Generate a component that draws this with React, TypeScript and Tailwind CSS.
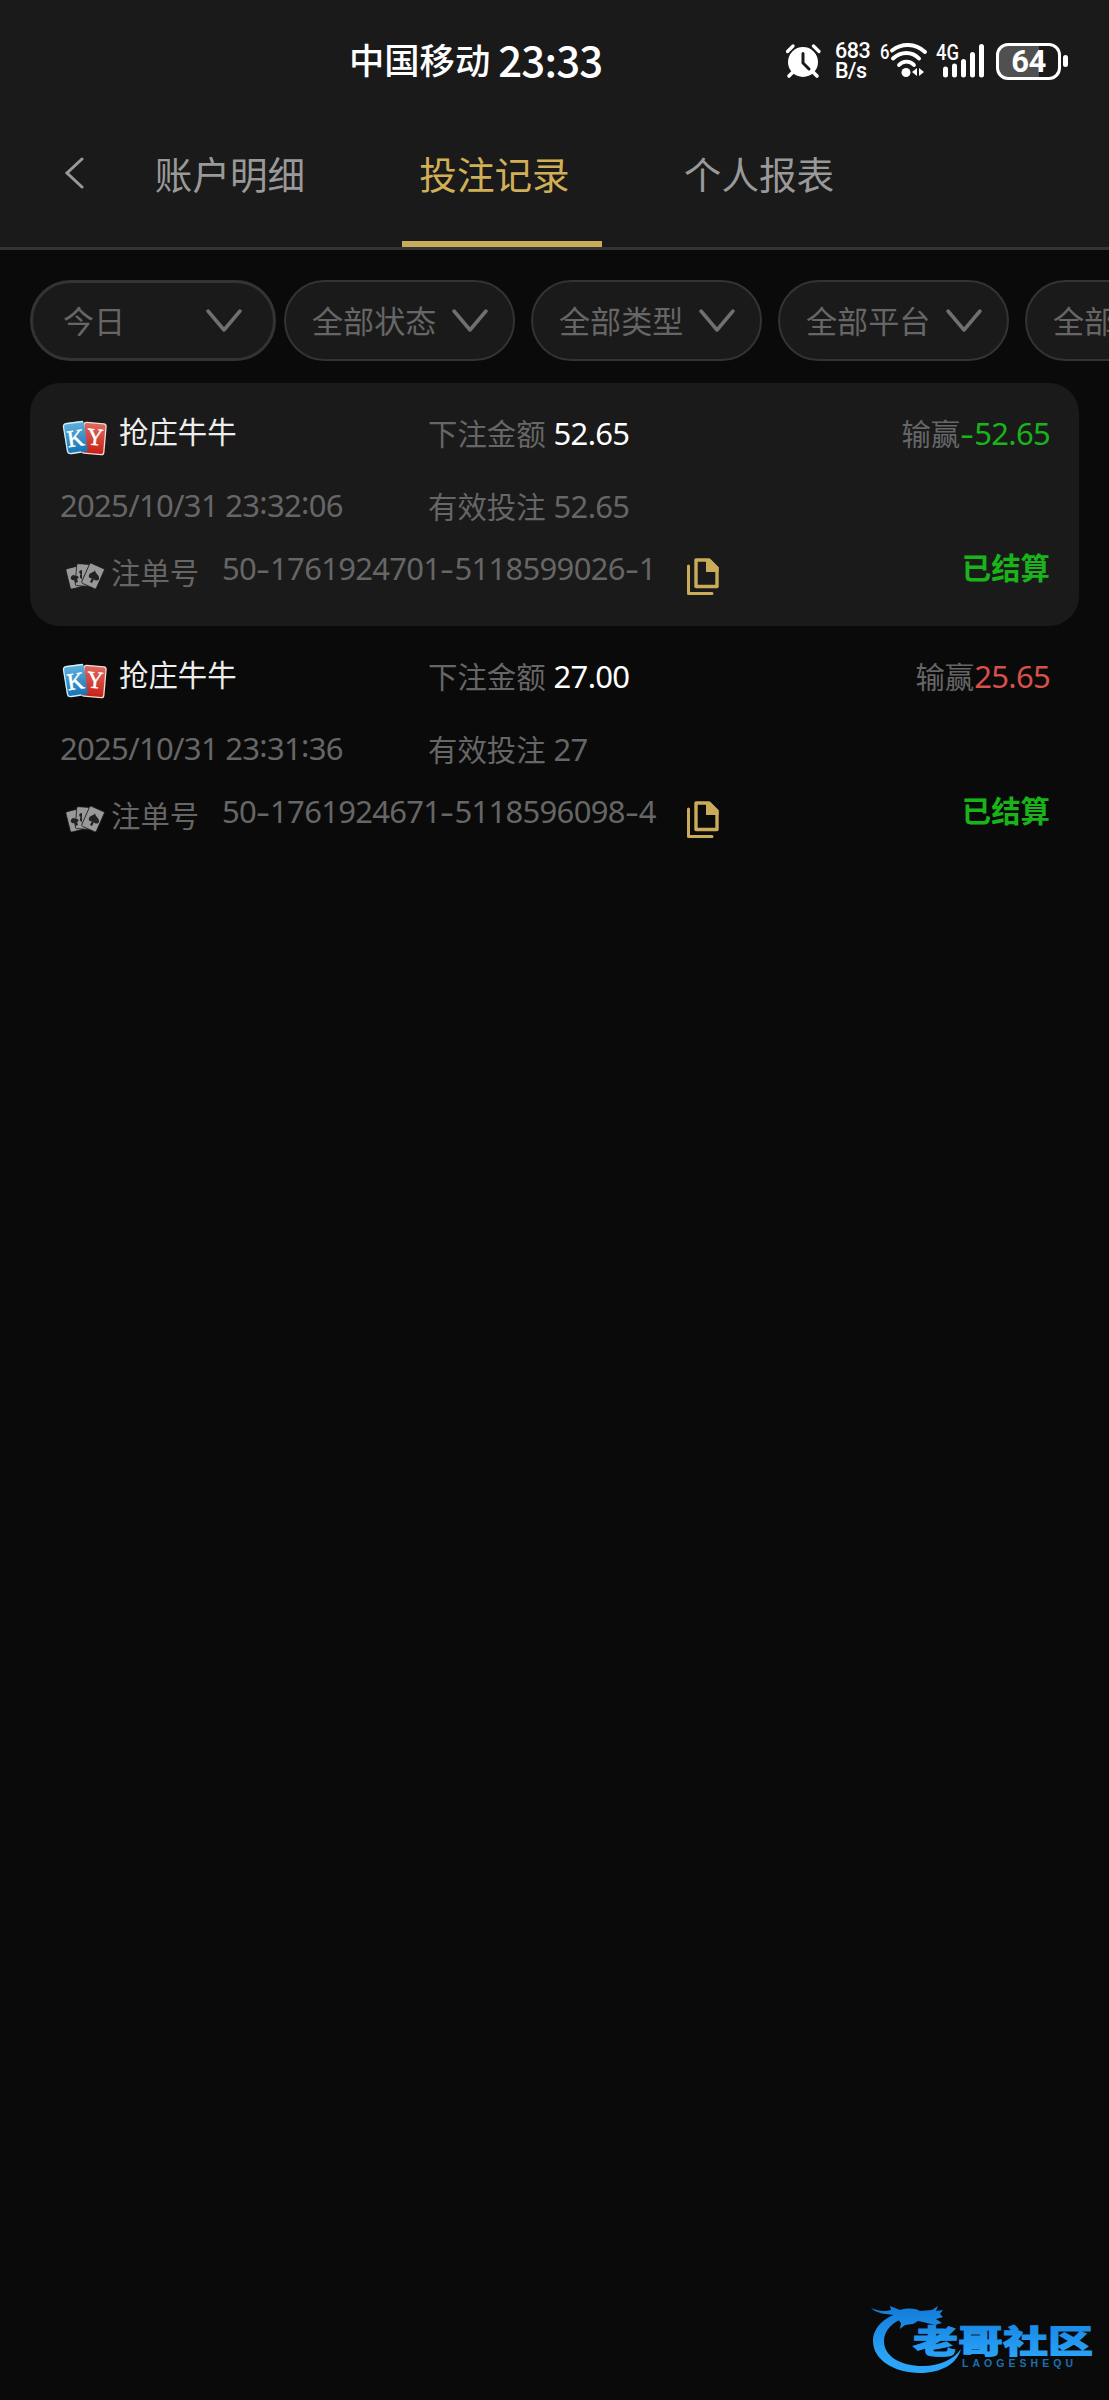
import type { ReactNode } from 'react';

const tabs = ['账户明细', '投注记录', '个人报表'];
const activeTab = '投注记录';

const filters = ['今日', '全部状态', '全部类型', '全部平台', '全部游戏'];

const records = [
  {
    game: '抢庄牛牛',
    time: '2025/10/31 23:32:06',
    amount: '52.65',
    valid: '52.65',
    profit: '-52.65',
    orderNo: '50-1761924701-5118599026-1',
    status: '已结算',
  },
  {
    game: '抢庄牛牛',
    time: '2025/10/31 23:31:36',
    amount: '27.00',
    valid: '27',
    profit: '25.65',
    orderNo: '50-1761924671-5118596098-4',
    status: '已结算',
  },
];

function Num({ children, className = '' }: { children: string; className?: string }) {
  return (
    <span className={`font-['Noto_Sans','Noto_Sans_CJK_SC',sans-serif] text-[31px] tracking-[-0.7px] ${className}`}>
      {children.split(/([-:])/).map((part, i) => {
        if (part === '-') {
          return (
            <span key={i} className="inline-block w-[14px] scale-x-[1.4] text-center tracking-normal">
              -
            </span>
          );
        }
        if (part === ':') {
          return (
            <span key={i} className="relative -top-[3px]">
              :
            </span>
          );
        }
        return part;
      })}
    </span>
  );
}

function StatusBar() {
  return (
    <div className="flex h-[110px] items-center pl-[349px] pt-3 text-white">
      <div className="flex w-[437px] items-center whitespace-nowrap font-medium">
        <span className="-mt-[3px] text-[35.3px]">中国移动</span>
        <span className="-mt-[5px] ml-[8px] text-[42px] leading-none tracking-[-0.8px]">23:33</span>
      </div>

      <svg width="36" height="36" viewBox="0 0 36 36" fill="none" stroke="#fff" strokeLinecap="round">
        <circle cx="17" cy="19" r="15" fill="#fff" stroke="none" />
        <path d="M1.500 8.500 7 3M33 8.500 27.500 3" strokeWidth="3.200" />
        <path d="m7 29-4 4M27 29l4 4" strokeWidth="3.600" />
        <path d="M17 10.500V20l6 6" stroke="#1a1a1a" strokeWidth="3" />
      </svg>

      <div className="ml-[13px] flex w-[36px] flex-col font-['Roboto',sans-serif] text-[21.500px] font-medium leading-[20px] tracking-[-0.5px]">
        <span>683</span>
        <span>B/s</span>
      </div>

      <svg className="ml-[9px] overflow-visible" width="48" height="38" viewBox="0 0 48 38" fill="none" stroke="#fff">
        <text x="0" y="17" fill="#fff" stroke="none" fontFamily="Roboto" fontSize="20" fontWeight="500" textLength="9.500" lengthAdjust="spacingAndGlyphs">
          6
        </text>
        <path d="M12 8.500c10-7.500 23-7.500 33 1.500" strokeWidth="4" strokeLinecap="round" />
        <path d="M13 16.500c8-7.500 19-7.500 26 0" strokeWidth="4" strokeLinecap="round" />
        <path d="M19 23c4-4.500 11-4.500 15 0" strokeWidth="3.800" strokeLinecap="round" />
        <circle cx="26" cy="30.500" r="4.500" fill="#fff" stroke="none" />
        <path d="m37 26v8l-5-4zM39 26v8l5-4z" fill="#fff" stroke="none" />
      </svg>

      <svg className="ml-[8px] overflow-visible" width="50" height="38" viewBox="0 0 50 38">
        <text x="0" y="18" fill="#fff" fontFamily="Roboto" fontSize="22" fontWeight="500" textLength="23" lengthAdjust="spacingAndGlyphs">
          4G
        </text>
        <g stroke="#fff" strokeWidth="5" strokeLinecap="round">
          <path d="M9.500 27v6M18.500 24v9M27.500 19.500V33M36.500 12.500V33M45.500 4.500v28.500" />
        </g>
      </svg>

      <div className="ml-[10px] flex h-[37px] w-[65px] items-center justify-center rounded-[12px] border-[3px] border-white bg-[linear-gradient(90deg,#505050_68%,#1a1a1a_68%)] font-['Roboto',sans-serif] text-[31px] font-bold leading-none tracking-[-0.5px]">
        64
      </div>
      <div className="ml-[2px] h-[12px] w-[5px] rounded-[2.500px] bg-white" />
    </div>
  );
}

function TabBar() {
  return (
    <nav className="flex h-[137px] items-stretch text-[37.600px] leading-[50px]">
      <div className="flex w-[137px] justify-end pr-[53px] pt-[47px]">
        <svg width="20" height="32" viewBox="0 0 20 32" fill="none" stroke="#999" strokeWidth="3" strokeLinecap="round">
          <path d="M18 2 3 16l15 14" />
        </svg>
      </div>
      {tabs.map((tab) => (
        <div key={tab} className="mr-[64.500px] flex w-[200px] flex-col items-center justify-between pt-[38px]">
          <span className={`pr-[14px] ${tab === activeTab ? 'text-[#d0af57]' : 'text-[#999]'}`}>{tab}</span>
          {tab === activeTab && <span className="h-[6px] w-full bg-[#c9ab5a]" />}
        </div>
      ))}
    </nav>
  );
}

function FilterPill({ label, first }: { label: string; first: boolean }) {
  return (
    <div
      className={`flex h-[81px] shrink-0 items-center justify-between rounded-full border-[#333] bg-[#1a1a1a] ${
        first ? 'mr-[8px] w-[246px] border-[3px] pl-[30px] pr-[31px]' : 'mr-[16px] w-[231px] border-2 pl-[26px] pr-[25px]'
      }`}
    >
      <span className="-mt-[1px] text-[31.100px] text-[#666]">{label}</span>
      <svg width="36" height="24" viewBox="0 0 36 24" fill="none" stroke="#707070" strokeWidth="3.500" strokeLinecap="round" strokeLinejoin="round">
        <path d="m2 2 16 19L34 2" />
      </svg>
    </div>
  );
}

function PlatformIcon() {
  return (
    <svg width="46" height="36" viewBox="0 0 46 36">
      <defs>
        <linearGradient id="kyBlue" x1="0" y1="0" x2="0" y2="1">
          <stop offset="0" stopColor="#5db2dc" />
          <stop offset="1" stopColor="#1672b4" />
        </linearGradient>
        <linearGradient id="kyRed" x1="0" y1="0" x2="0" y2="1">
          <stop offset="0" stopColor="#df6a62" />
          <stop offset="1" stopColor="#c81f12" />
        </linearGradient>
      </defs>
      <rect x="21" y="3" width="22" height="31" rx="2.500" transform="rotate(5 32 18)" fill="url(#kyRed)" stroke="#f3dcda" strokeWidth="1.300" />
      <rect x="3" y="2" width="21" height="31" rx="2.500" transform="rotate(-8 14 18)" fill="url(#kyBlue)" />
      <path d="M21 1.500 5 3.500Q1 4 1.500 7l4 24q.5 3 4 2.500l10-1.500" fill="none" stroke="#d5ebf5" strokeWidth="1.300" />
      <g fill="#fff" stroke="#fff" strokeWidth="0.500" fontFamily="Liberation Serif" fontSize="24">
        <text x="5" y="26" transform="rotate(-8 14 18)" textLength="17" lengthAdjust="spacingAndGlyphs">
          K
        </text>
        <text x="25" y="25" transform="rotate(5 32 18)" textLength="16" lengthAdjust="spacingAndGlyphs">
          Y
        </text>
      </g>
    </svg>
  );
}

function CardsIcon() {
  return (
    <svg width="40" height="28" viewBox="0 0 40 28">
      <g fill="#999" stroke="#1a1a1a" strokeWidth="0.800">
        <rect x="3" y="4" width="14" height="21" rx="1.500" transform="rotate(-14 10 15)" />
        <rect x="11" y="1" width="15" height="22" rx="1.500" transform="rotate(4 18 12)" />
        <rect x="20" y="2" width="16" height="22" rx="1.500" transform="rotate(24 28 13)" />
      </g>
      <path d="M8 12c-4 2-2 6 1 5l1 3 3-1-1-3c2 0 2-3 0-3M17 7c-4 0-3 4-1 4-2 1-1 5 1 5" fill="#222" />
      <path d="M30 7c0 4 5 5 4 9-1 2-4 2-5 0l-2 4-2-1 2-4c-2 1-4-1-3-3 1-3 5-2 6-5z" fill="#222" />
    </svg>
  );
}

function CopyIcon() {
  return (
    <svg width="32" height="37" viewBox="0 0 32 37">
      <path d="M1.500 8v27.500H25" fill="none" stroke="#c9ab5a" strokeWidth="3" strokeLinejoin="round" strokeLinecap="round" />
      <path d="M9 2h13l8 8v18.500H9z" fill="none" stroke="#c9ab5a" strokeWidth="3.400" strokeLinejoin="round" />
      <path d="M19 1h4l8.500 8.500V14H19z" fill="#c9ab5a" />
    </svg>
  );
}

function Cell({ children, className = '' }: { children: ReactNode; className?: string }) {
  return <div className={`flex h-[40px] items-center leading-[40px] ${className}`}>{children}</div>;
}

function RecordCard({ record, shaded }: { record: (typeof records)[number]; shaded: boolean }) {
  const lost = record.profit.startsWith('-');
  return (
    <section
      className={`h-[243px] whitespace-nowrap rounded-[30px] pl-[30px] pr-[29px] pt-[28px] text-[29.400px] text-[#666] ${
        shaded ? 'bg-[#1a1a1a]' : ''
      }`}
    >
      <div className="flex">
        <Cell className="w-[368px] pl-[2px]">
          <span className="mt-[13px]">
            <PlatformIcon />
          </span>
          <span className="-mt-[2px] ml-[11px] text-[#eee]">{record.game}</span>
        </Cell>
        <Cell className="mt-[1px]">
          下注金额<Num className="relative top-px ml-[8px] text-white">{record.amount}</Num>
        </Cell>
        <Cell className="ml-auto mt-[1px]">
          输赢
          <Num className={`relative top-px ${lost ? 'text-[#19b31a]' : 'text-[#d8504a]'}`}>{record.profit}</Num>
        </Cell>
      </div>

      <div className="mt-[33px] flex">
        <Cell className="w-[368px]">
          <Num>{record.time}</Num>
        </Cell>
        <Cell>
          有效投注<Num className="relative top-px ml-[8px]">{record.valid}</Num>
        </Cell>
      </div>

      <div className="mt-[22px] flex">
        <Cell className="mt-[4px] w-[162px] pl-[5px]">
          <span className="mt-[12px]">
            <CardsIcon />
          </span>
          <span className="ml-[6px]">注单号</span>
        </Cell>
        <Cell className="mt-[1px] w-[465px]">
          <Num>{record.orderNo}</Num>
        </Cell>
        <Cell className="mt-[9px]">
          <CopyIcon />
        </Cell>
        <Cell className="-mt-[1px] ml-auto font-bold text-[#19b31a]">{record.status}</Cell>
      </div>
    </section>
  );
}

function CommunityLogo() {
  return (
    <svg width="225" height="80" viewBox="0 0 225 80">
      <defs>
        <linearGradient id="logo" x1="0" y1="0" x2="0" y2="80" gradientUnits="userSpaceOnUse">
          <stop offset="0.200" stopColor="#1580dc" />
          <stop offset="0.800" stopColor="#2aa5fa" />
        </linearGradient>
      </defs>
      <g fill="url(#logo)">
        <path d="M32 16C14 20 2 31 2 45c0 18 20 32 47 32 21 0 37-9 41-24-7 10-21 17-38 17-23 0-39-10-39-25 0-11 9-20 23-24z" />
        <path d="M0 12c7 3 13 4 20 2l-1-4 10 4c8-2 14-2 20 1l12-1 6-4-2 5 7-1-3 4 3 3-7 2 6 4-7 2-12-3-5-1-5 3-8 1-5 4 1-6-7-8C16 18 6 18 0 12z" />
        <g stroke="url(#logo)" strokeWidth="1">
          <text x="42" y="57" fontSize="32" fontWeight="900" textLength="180" lengthAdjust="spacingAndGlyphs">
            老哥社区
          </text>
        </g>
        <text x="91" y="71" fontSize="10.500" fontFamily="Liberation Sans" fontWeight="700" textLength="111" fill="#1b70ad">
          LAOGESHEQU
        </text>
      </g>
    </svg>
  );
}

export default function App() {
  return (
    <div className="flex h-[2400px] w-[1109px] flex-col overflow-hidden bg-[#0a0a0a] font-['Noto_Sans_CJK_SC',sans-serif]">
      <header className="border-b-[3px] border-[#333] bg-[#1a1a1a]">
        <StatusBar />
        <TabBar />
      </header>

      <div className="mt-[30px] flex overflow-hidden pl-[30px]">
        {filters.map((label, i) => (
          <FilterPill key={label} label={label} first={i === 0} />
        ))}
      </div>

      <main className="mt-[22px] px-[30px]">
        {records.map((record, i) => (
          <RecordCard key={record.orderNo} record={record} shaded={i % 2 === 0} />
        ))}
      </main>

      <footer className="mt-auto flex justify-end pb-[24px] pr-[13px]">
        <CommunityLogo />
      </footer>
    </div>
  );
}
